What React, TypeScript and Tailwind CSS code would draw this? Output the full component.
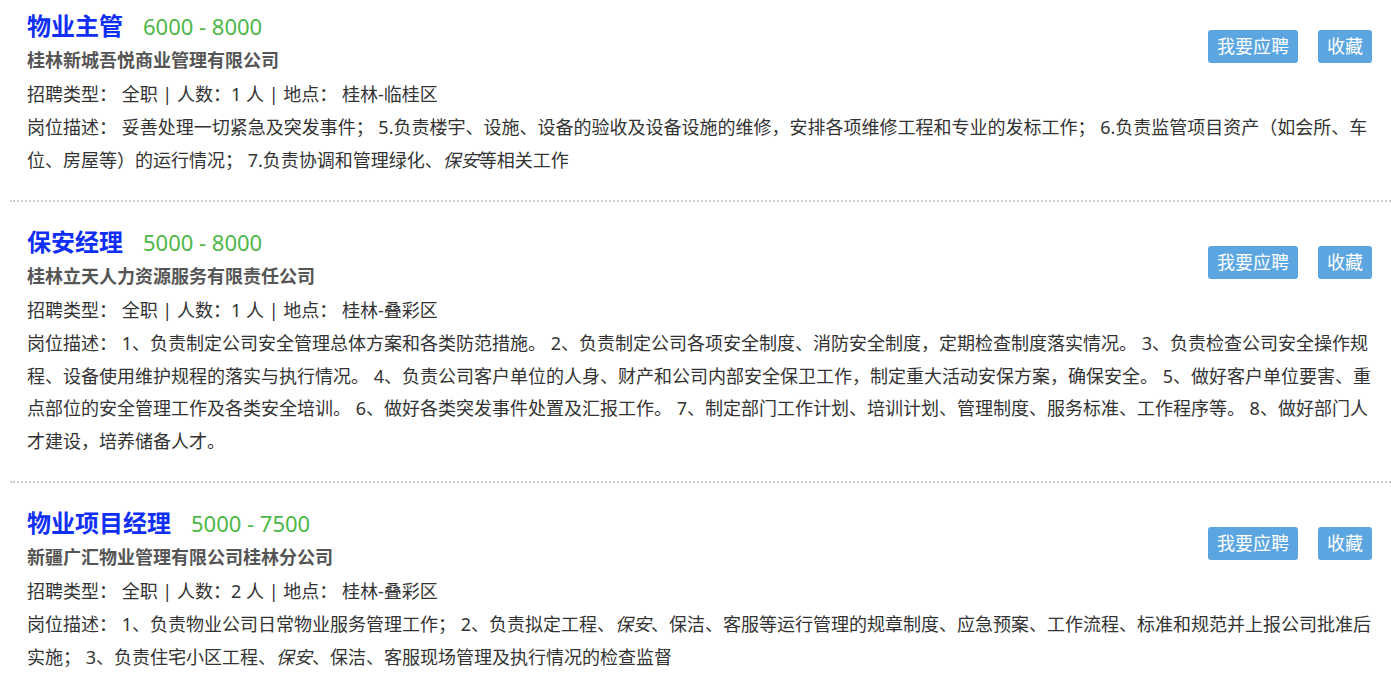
import React from "react";

type Job = {
  title: string;
  salary: string;
  company: string;
  count: string;
  place: string;
  desc: React.ReactNode;
};

const I = ({ children }: { children: React.ReactNode }) => <i className="italic">{children}</i>;

const jobs: Job[] = [
  {
    title: "物业主管",
    salary: "6000 - 8000",
    company: "桂林新城吾悦商业管理有限公司",
    count: "1",
    place: "桂林-临桂区",
    desc: (
      <>
        妥善处理一切紧急及突发事件； 5.负责楼宇、设施、设备的验收及设备设施的维修，安排各项维修工程和专业的发标工作； 6.负责监管项目资产（如会所、车位、房屋等）的运行情况； 7.负责协调和管理绿化、<I>保安</I>等相关工作
      </>
    ),
  },
  {
    title: "保安经理",
    salary: "5000 - 8000",
    company: "桂林立天人力资源服务有限责任公司",
    count: "1",
    place: "桂林-叠彩区",
    desc: (
      <>
        1、负责制定公司安全管理总体方案和各类防范措施。 2、负责制定公司各项安全制度、消防安全制度，定期检查制度落实情况。 3、负责检查公司安全操作规程、设备使用维护规程的落实与执行情况。 4、负责公司客户单位的人身、财产和公司内部安全保卫工作，制定重大活动安保方案，确保安全。 5、做好客户单位要害、重点部位的安全管理工作及各类安全培训。 6、做好各类突发事件处置及汇报工作。 7、制定部门工作计划、培训计划、管理制度、服务标准、工作程序等。 8、做好部门人才建设，培养储备人才。
      </>
    ),
  },
  {
    title: "物业项目经理",
    salary: "5000 - 7500",
    company: "新疆广汇物业管理有限公司桂林分公司",
    count: "2",
    place: "桂林-叠彩区",
    desc: (
      <>
        1、负责物业公司日常物业服务管理工作； 2、负责拟定工程、<I>保安</I>、保洁、客服等运行管理的规章制度、应急预案、工作流程、标准和规范并上报公司批准后实施； 3、负责住宅小区工程、<I>保安</I>、保洁、客服现场管理及执行情况的检查监督
      </>
    ),
  },
];

export default function App() {
  return (
    <div
      className="w-[1391px] h-[686px] overflow-hidden bg-white pl-[10px]"
      style={{ fontFamily: '"Noto Sans", "Noto Sans CJK SC", sans-serif' }}
    >
      {jobs.map((j, idx) => (
        <div
          key={idx}
          className={
            "border-b-2 border-dotted border-[#cccccc] pl-[17px] pr-[18px] pb-[24px] " +
            (idx === 0 ? "pt-[9px]" : "pt-[23px]")
          }
        >
          <div className="float-right mt-[21px] mr-[1px] flex gap-[20px]">
            <button className="h-[33px] rounded-[3px] bg-[#5ba6e1] px-[9px] text-[18px] leading-[33px] text-white">
              我要应聘
            </button>
            <button className="h-[33px] rounded-[3px] bg-[#5ba6e1] px-[9px] text-[18px] leading-[33px] text-white">
              收藏
            </button>
          </div>
          <div className="flex h-[34px] items-center">
            <span className="text-[24px] font-bold leading-[34px] text-[#0f2ff5]">{j.title}</span>
            <span className="ml-[20px] text-[22px] leading-[34px] text-[#4db748]">{j.salary}</span>
          </div>
          <div className="text-[18px] font-bold leading-[35px] text-[#555555]">{j.company}</div>
          <div className="text-[18px] leading-[33px] text-[#333333]">
            招聘类型： 全职 | 人数：{j.count} 人 | 地点： {j.place}
          </div>
          <div className="text-[18px] leading-[32.5px] text-[#333333]">岗位描述： {j.desc}</div>
        </div>
      ))}
    </div>
  );
}
